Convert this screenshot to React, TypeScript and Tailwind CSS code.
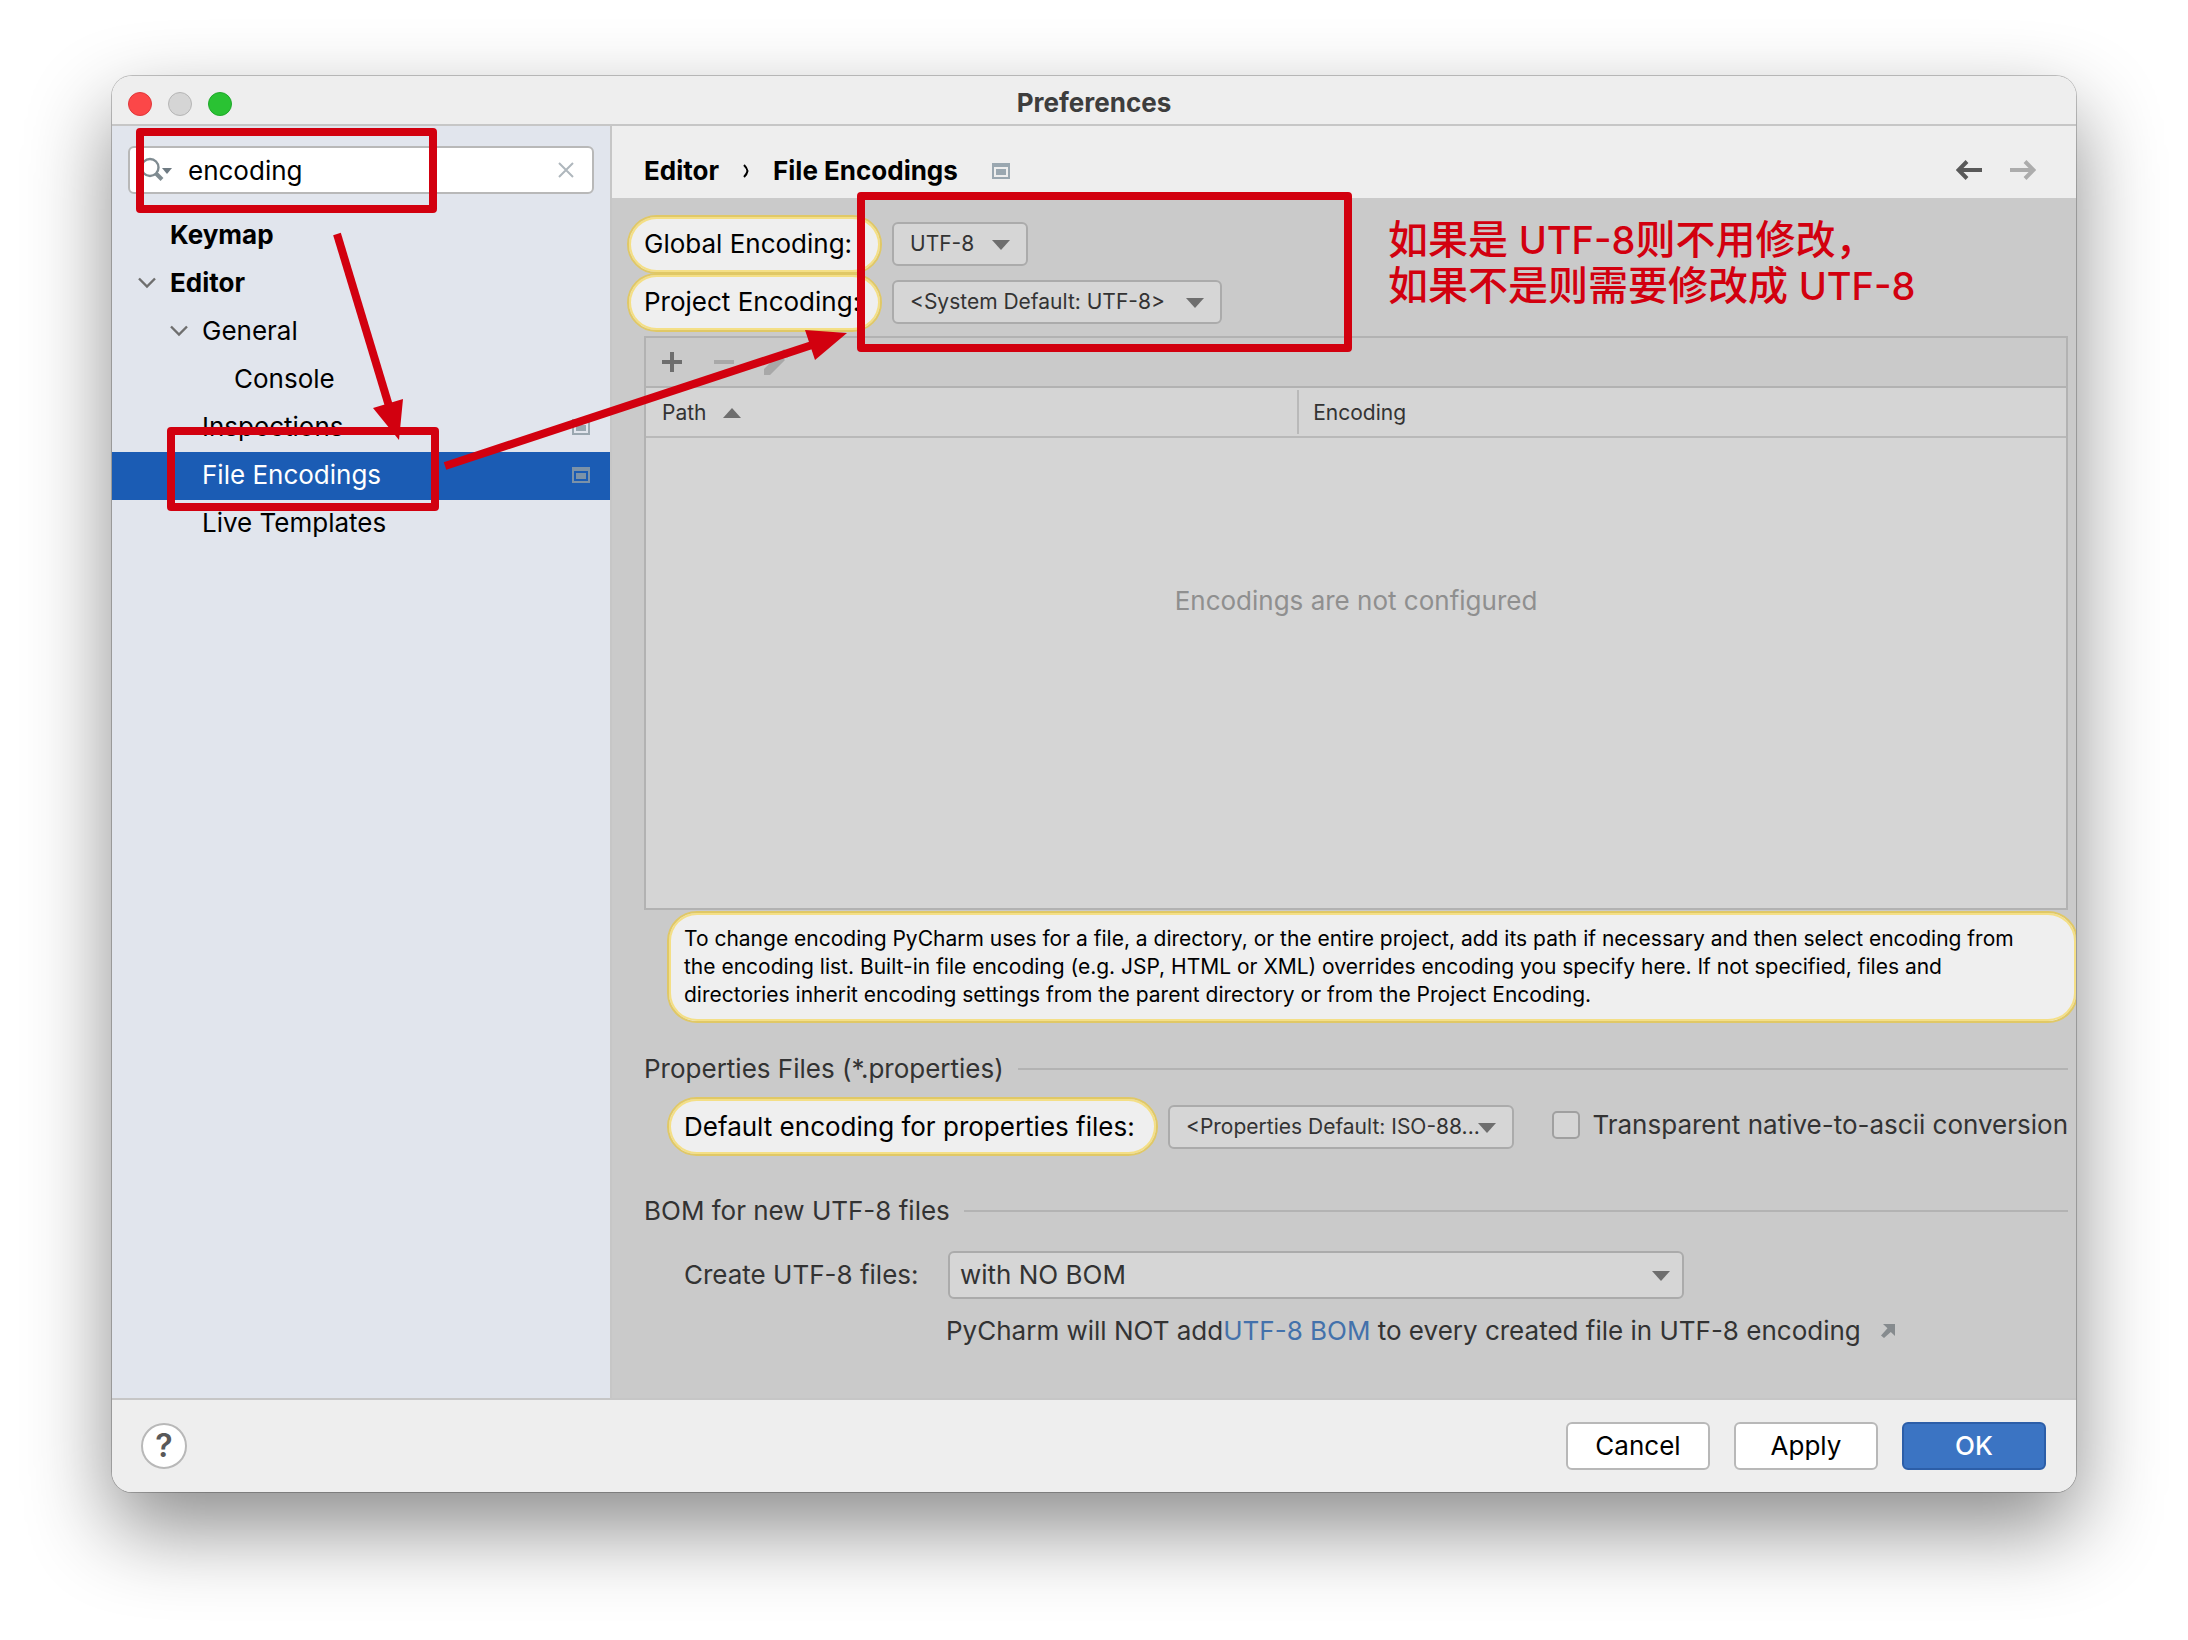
import React from 'react';

function ProjectIcon({ className }: { className?: string }) {
  return (
    <svg className={className} width="18" height="16" viewBox="0 0 18 16" aria-hidden="true">
      <path fillRule="evenodd" fill="currentColor" d="M0 0h18v16H0zM2 4v10h14V4z" />
      <rect x="4" y="6" width="10" height="6" fill="currentColor" />
    </svg>
  );
}

function Chevron() {
  return (
    <svg width="18" height="12" viewBox="0 0 18 12" fill="none" stroke="#6e6e6e" strokeWidth="2.4" aria-hidden="true">
      <path d="M1 1.5l8 8 8-8" />
    </svg>
  );
}

function TreeItem({
  label,
  indent,
  open,
  bold,
  selected,
  project,
}: {
  label: string;
  indent: string;
  open?: boolean;
  bold?: boolean;
  selected?: boolean;
  project?: boolean;
}) {
  return (
    <li
      role="treeitem"
      aria-selected={!!selected}
      className={`flex h-12 items-center pr-5 pb-0.5 ${indent} ${selected ? 'bg-[#1b5cb4] text-white' : 'text-black'} ${bold ? 'font-bold' : ''}`}
    >
      <span className="w-8 shrink-0">{open && <Chevron />}</span>
      <span className="grow">{label}</span>
      {project && <ProjectIcon className={selected ? 'text-[#7b92a8]' : 'text-[#9aa7b0]'} />}
    </li>
  );
}

function Select({ id, value, box, arrow }: { id: string; value: string; box: string; arrow: string }) {
  return (
    <div className={`relative shrink-0 ${box}`}>
      <select id={id} className="h-full w-full appearance-none rounded-md border-2 border-[#ababab] bg-[#d6d6d6] text-[#333]">
        <option>{value}</option>
      </select>
      <svg className={`pointer-events-none absolute top-1/2 -mt-1 ${arrow}`} width="18" height="10" viewBox="0 0 18 10" aria-hidden="true">
        <path d="M0 0h18l-9 10z" fill="#6e6e6e" />
      </svg>
    </div>
  );
}

const pill = 'border-2 border-[#e0c866] bg-[#efefef] text-black inset-shadow-[0_0_0_2px_#f4df86]';

function SectionTitle({ children }: { children: React.ReactNode }) {
  return (
    <h2 className="flex h-8 items-center gap-3.5">
      {children}
      <span className="h-0.5 grow bg-[#b3b3b3]" />
    </h2>
  );
}

function Annotations() {
  return (
    <div className="pointer-events-none absolute top-0 left-0">
      <svg className="absolute top-0 left-0 overflow-visible" width="1250" height="440" viewBox="112 76 1250 440" fill="none" stroke="#d2000f" strokeWidth="8" strokeLinejoin="round" aria-hidden="true">
        <rect x="140" y="132" width="293" height="77" />
        <rect x="171" y="431" width="264" height="76" />
        <rect x="861" y="196" width="487" height="152" />
        <path d="M337 234L389 406" />
        <path d="M445 466L812 345" />
        <path d="M373 408l30-9-4 41zM805 330l42 3-32 27z" fill="#d2000f" stroke="none" />
      </svg>
      <p className="absolute top-[141px] left-[1276px] w-max text-[40px] leading-[46px] font-medium text-[#d2000f]">
        如果是 <span className="text-[38px]">UTF-8</span>则不用修改，
        <br />
        如果不是则需要修改成 <span className="text-[38px]">UTF-8</span>
      </p>
    </div>
  );
}

export default function App() {
  return (
    <div className="min-h-screen bg-white px-28 pt-[76px] pb-[148px] font-['Inter','Noto_Sans_CJK_SC',sans-serif] text-[26px] leading-8">
      <div className="relative rounded-[20px] shadow-[0_0_0_1px_rgba(0,0,0,0.22),0_36px_84px_rgba(0,0,0,0.46)]">
        <div className="overflow-hidden rounded-[20px] bg-[#eeeeee]">
          <header className="grid h-[50px] grid-cols-[1fr_auto_1fr] items-center border-b-2 border-[#c6c6c6] px-4">
            <div className="flex gap-4 pt-2">
              <button aria-label="Close" className="size-6 rounded-full border border-[#e0373a] bg-[#fc4748]" />
              <button aria-label="Minimize" className="size-6 rounded-full border border-[#b5b5b5] bg-[#d5d5d5]" />
              <button aria-label="Zoom" className="size-6 rounded-full border border-[#1fa82a] bg-[#2ac233]" />
            </div>
            <h1 className="pt-1.5 font-bold text-[#3d3d3d]">Preferences</h1>
          </header>

          <div className="flex">
            <aside className="w-[500px] shrink-0 border-r-2 border-[#c6c6c6] bg-[#e1e5ed]">
              <div className="mx-4 mt-5 flex h-12 items-center rounded-md border-2 border-[#b8b8b8] bg-white pr-4 pl-2.5">
                <svg className="shrink-0" width="32" height="26" viewBox="0 0 32 26" fill="none" stroke="#7f8b91" strokeWidth="2.4" aria-hidden="true">
                  <circle cx="10" cy="10.500" r="8.500" />
                  <path d="M16 16.500l6 6" strokeWidth="4" />
                  <path d="M22 11h10l-5 6z" fill="#6e7a82" stroke="none" />
                </svg>
                <input aria-label="Search settings" defaultValue="encoding" className="ml-4 w-full min-w-0 bg-transparent pt-0.5 text-black outline-none" />
                <button aria-label="Clear search">
                  <svg width="20" height="18" viewBox="0 0 20 18" stroke="#afb7bd" strokeWidth="2" aria-hidden="true">
                    <path d="M3 2l14 14M17 2L3 16" />
                  </svg>
                </button>
              </div>
              <ul role="tree" aria-label="Settings" className="mt-[18px]">
                <TreeItem label="Keymap" indent="pl-[26px]" bold />
                <TreeItem label="Editor" indent="pl-[26px]" bold open />
                <TreeItem label="General" indent="pl-[58px]" open />
                <TreeItem label="Console" indent="pl-[90px]" />
                <TreeItem label="Inspections" indent="pl-[58px]" project />
                <TreeItem label="File Encodings" indent="pl-[58px]" selected project />
                <TreeItem label="Live Templates" indent="pl-[58px]" />
              </ul>
            </aside>

            <main className="min-w-0 grow overflow-hidden">
              <div className="flex h-[72px] items-center pt-5 pr-10 pb-0.5 pl-8 font-bold text-black">
                <nav aria-label="Breadcrumb" className="flex items-center">
                  <span>Editor</span>
                  <svg className="mx-6" width="6" height="14" viewBox="0 0 6 14" fill="none" stroke="#000" strokeWidth="2" aria-hidden="true">
                    <path d="M1 1q3 3 3.500 6-.5 3-3.500 6" />
                  </svg>
                  <span>File Encodings</span>
                </nav>
                <ProjectIcon className="ml-[34px] text-[#9aa7b0]" />
                <div className="ml-auto flex gap-7 pb-0.5">
                  <button aria-label="Back">
                    <svg width="26" height="20" viewBox="0 0 26 20" fill="none" stroke="#595959" strokeWidth="4" aria-hidden="true">
                      <path d="M26 10H3M11 1.500L2.500 10l8.500 8.500" />
                    </svg>
                  </button>
                  <button aria-label="Forward" disabled>
                    <svg width="26" height="20" viewBox="0 0 26 20" fill="none" stroke="#acacac" strokeWidth="4" aria-hidden="true">
                      <path d="M0 10h23M15 1.500l8.500 8.500-8.500 8.500" />
                    </svg>
                  </button>
                </div>
              </div>

              <div className="bg-[#cacaca] pt-[17px] pr-2 pb-[51px] pl-8 text-[#333]">
                <div className="-ml-[17px] flex h-[58px] items-center gap-2.5">
                  <label htmlFor="global" className={`flex h-[59px] w-[255px] shrink-0 items-center rounded-full pl-[15px] whitespace-nowrap ${pill}`}>
                    Global Encoding:
                  </label>
                  <Select id="global" value="UTF-8" box="h-11 w-[136px] text-[21px] [&>select]:pl-4" arrow="right-[18px]" />
                </div>
                <div className="-ml-[17px] flex h-[58px] items-center gap-2.5">
                  <label htmlFor="project" className={`flex h-[59px] w-[255px] shrink-0 items-center rounded-full pl-[15px] whitespace-nowrap ${pill}`}>
                    Project Encoding:
                  </label>
                  <Select id="project" value="<System Default: UTF-8>" box="h-11 w-[330px] text-[21px] [&>select]:pl-4" arrow="right-[18px]" />
                </div>

                <div className="mt-[5px] h-[574px] border-2 border-[#b2b2b2] bg-[#d5d5d5]">
                  <div className="flex h-[50px] items-center border-b-2 border-[#b2b2b2] bg-[#cacaca] pl-4">
                    <button aria-label="Add">
                      <svg width="20" height="20" viewBox="0 0 20 20" fill="#6e6e6e" aria-hidden="true">
                        <path d="M8 0h4v8h8v4h-8v8H8v-8H0V8h8z" />
                      </svg>
                    </button>
                    <button aria-label="Remove" disabled className="ml-8">
                      <svg width="20" height="20" viewBox="0 0 20 20" fill="#a8a8a8" aria-hidden="true">
                        <path d="M0 8h20v4H0z" />
                      </svg>
                    </button>
                    <button aria-label="Edit" disabled className="ml-[30px]">
                      <svg width="26" height="26" viewBox="0 0 26 26" fill="#a8a8a8" aria-hidden="true">
                        <path d="M0 26v-6L15 5l6 6L6 26zM17 3l3-3 6 6-3 3z" />
                      </svg>
                    </button>
                  </div>
                  <table className="w-full table-fixed border-collapse text-left">
                    <thead>
                      <tr className="h-[49px] border-b-2 border-[#b9b9b9] text-[21px]">
                        <th scope="col" className="w-[46%] p-0 pl-4 font-normal">
                          <span className="flex items-center gap-4 pt-0.5">
                            Path
                            <svg width="18" height="10" viewBox="0 0 18 10" aria-hidden="true">
                              <path d="M0 10h18l-9-10z" fill="#6e6e6e" />
                            </svg>
                          </span>
                        </th>
                        <th scope="col" className="p-0 font-normal">
                          <span className="-ml-0.5 flex h-11 items-center border-l-2 border-[#b9b9b9] pt-0.5 pl-3.5">Encoding</span>
                        </th>
                      </tr>
                    </thead>
                    <tbody>
                      <tr>
                        <td colSpan={2} className="pt-[147px] text-center text-[#8f8f8f]">
                          Encodings are not configured
                        </td>
                      </tr>
                    </tbody>
                  </table>
                </div>

                <p className={`mt-px -mr-[10px] ml-[23px] rounded-[30px] pt-3 pr-4 pb-3 pl-[15px] text-[21px] leading-7 ${pill}`}>
                  To change encoding PyCharm uses for a file, a directory, or the entire project, add its path if necessary and then select encoding from
                  <br />
                  the encoding list. Built-in file encoding (e.g. JSP, HTML or XML) overrides encoding you specify here. If not specified, files and
                  <br />
                  directories inherit encoding settings from the parent directory or from the Project Encoding.
                </p>

                <div className="mt-[30px]">
                  <SectionTitle>Properties Files (*.properties)</SectionTitle>
                </div>
                <div className="mt-3 ml-[23px] flex h-[59px] items-center">
                  <label htmlFor="properties" className={`flex h-full w-[491px] shrink-0 items-center rounded-full pl-[15px] whitespace-nowrap ${pill}`}>
                    Default encoding for properties files:
                  </label>
                  <Select id="properties" value="<Properties Default: ISO-88..." box="ml-2.5 h-11 w-[346px] text-[21px] [&>select]:pl-4" arrow="right-[18px]" />
                  <label className="ml-auto flex items-center gap-3 pb-1 whitespace-nowrap">
                    <input type="checkbox" className="size-7 appearance-none rounded-[5px] border-2 border-[#a0a0a0] bg-[#d5d5d5]" />
                    Transparent native-to-ascii conversion
                  </label>
                </div>

                <div className="mt-[39px]">
                  <SectionTitle>BOM for new UTF-8 files</SectionTitle>
                </div>
                <div className="mt-6 ml-10 flex items-center">
                  <label htmlFor="bom" className="w-[264px] shrink-0">
                    Create UTF-8 files:
                  </label>
                  <Select id="bom" value="with NO BOM" box="h-12 w-[736px] [&>select]:pl-2.5" arrow="right-3.5" />
                </div>
                <p className="mt-4 ml-[302px] flex items-center whitespace-pre">
                  PyCharm will NOT add
                  <a href="#bom" className="text-[#4371ab]">UTF-8 BOM</a> to every created file in UTF-8 encoding
                  <svg className="ml-5" width="14" height="14" viewBox="0 0 14 14" aria-hidden="true">
                    <path d="M2 0h12v12L9.800 8 3 14 0 11.500 6.500 4.200z" fill="#868b8e" />
                  </svg>
                </p>
              </div>
            </main>
          </div>

          <footer className="flex h-[94px] items-center gap-6 border-t-2 border-[#c6c6c6] pr-[30px] pl-[29px]">
            <button aria-label="Help" className="mr-auto grid size-[46px] place-items-center rounded-full border-2 border-[#b8b8b8] bg-white text-[32px] font-semibold text-[#595959]">
              ?
            </button>
            <button className="h-12 w-36 rounded-md border-2 border-[#b8b8b8] bg-white text-black">Cancel</button>
            <button className="h-12 w-36 rounded-md border-2 border-[#b8b8b8] bg-white text-black">Apply</button>
            <button className="h-12 w-36 rounded-md border-2 border-[#2c5ea8] bg-[#3b74c3] font-medium text-white">OK</button>
          </footer>
        </div>
        <Annotations />
      </div>
    </div>
  );
}
